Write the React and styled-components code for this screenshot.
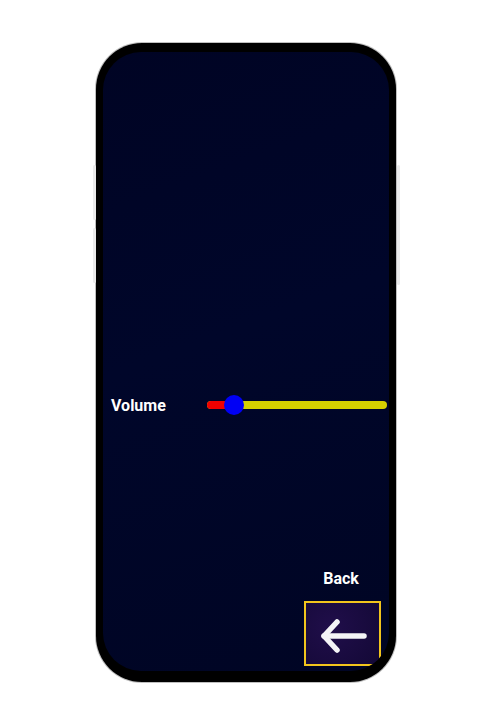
import React from 'react';
import styled, { createGlobalStyle } from 'styled-components';

const GlobalStyle = createGlobalStyle`
  html, body {
    margin: 0;
    padding: 0;
    background: #fff;
    font-family: Roboto, "Liberation Sans", sans-serif;
  }
`;

function App() {
  return (
    <>
      <GlobalStyle />
      <Page>
        <Phone>
          <SideButton $side="left" $top={122} $height={55} />
          <SideButton $side="left" $top={185} $height={55} />
          <SideButton $side="right" $top={122} $height={120} />
          <Screen>
            <VolumeRow>
              <Label>Volume</Label>
              <Slider>
                <Track />
                <Fill style={{ width: 27 }} />
                <Thumb style={{ left: 17 }} />
              </Slider>
            </VolumeRow>
            <BackArea>
              <BackLabel>Back</BackLabel>
              <BackButton>
                <svg width="72" height="61" viewBox="0 0 72 61">
                  <g fill="none" stroke="#f4f4f6" strokeWidth="5.5" strokeLinecap="round" strokeLinejoin="round">
                    <path d="M17 33 H57" />
                    <path d="M30 19 L17 33 L30 47" />
                  </g>
                </svg>
              </BackButton>
            </BackArea>
          </Screen>
        </Phone>
      </Page>
    </>
  );
}

const Page = styled.div`
  width: 495px;
  height: 725px;
  display: flex;
  justify-content: center;
  padding-top: 43px;
  padding-right: 3px;
  box-sizing: border-box;
`;

const Phone = styled.div`
  position: relative;
  width: 300px;
  height: 639px;
  box-sizing: border-box;
  padding: 9px 7px 11px 7px;
  background: #000;
  border-radius: 46px;
  box-shadow: 0 0 0 1px rgba(0, 0, 0, 0.25);
  display: flex;
`;

const SideButton = styled.div`
  position: absolute;
  top: ${(p) => p.$top}px;
  ${(p) => (p.$side === 'left' ? 'left: -3px;' : 'right: -4px;')}
  width: 3px;
  height: ${(p) => p.$height}px;
  background: #ebebeb;
  border-radius: 2px;
`;

const Screen = styled.div`
  flex: 1;
  border-radius: 38px;
  overflow: hidden;
  background: linear-gradient(160deg, #000424 0%, #00062a 45%, #000524 100%);
  display: flex;
  flex-direction: column;
`;

const VolumeRow = styled.div`
  display: flex;
  align-items: center;
  margin-top: 343px;
  padding-left: 8px;
  height: 20px;
`;

const Label = styled.span`
  width: 96px;
  color: #fff;
  font-weight: 700;
  font-size: 16px;
`;

const Slider = styled.div`
  position: relative;
  width: 180px;
  height: 20px;
  display: flex;
  align-items: center;
`;

const Track = styled.div`
  width: 100%;
  height: 8px;
  border-radius: 4px;
  background: #d6d000;
`;

const Fill = styled.div`
  position: absolute;
  left: 0;
  top: 6px;
  height: 8px;
  border-radius: 4px;
  background: #f00000;
`;

const Thumb = styled.div`
  position: absolute;
  top: 0;
  width: 20px;
  height: 20px;
  border-radius: 50%;
  background: #0000f5;
`;

const BackArea = styled.div`
  margin-top: auto;
  align-self: flex-end;
  display: flex;
  flex-direction: column;
  align-items: center;
  margin-right: 8px;
  margin-bottom: 5px;
`;

const BackLabel = styled.span`
  color: #fff;
  font-weight: 700;
  font-size: 16px;
  line-height: 18px;
  margin-bottom: 13px;
  margin-left: -3px;
`;

const BackButton = styled.div`
  width: 77px;
  height: 65px;
  box-sizing: border-box;
  border: 2px solid #f2c51c;
  background: radial-gradient(circle at 35% 40%, #200e4a 0%, #170a3c 70%, #130836 100%);
  display: flex;
  align-items: center;
  justify-content: center;
`;

export default App;
